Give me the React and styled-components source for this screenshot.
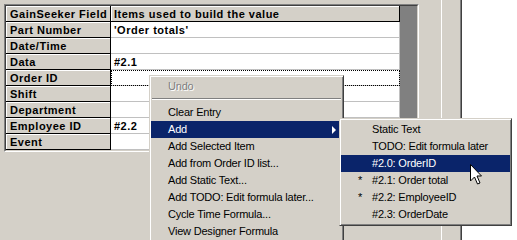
import styled, { createGlobalStyle } from 'styled-components'

const GlobalStyle = createGlobalStyle`
    html, body {
        margin: 0;
        padding: 0;
        background: #d4d0c8;
        overflow: hidden;
    }
    body {
        font-family: "Liberation Sans", Arial, sans-serif;
    }
`

const rows = [
    { field: 'GainSeeker Field', value: 'Items used to build the value', header: true },
    { field: 'Part Number', value: "'Order totals'" },
    { field: 'Date/Time', value: '' },
    { field: 'Data', value: '#2.1' },
    { field: 'Order ID', value: '', focus: true },
    { field: 'Shift', value: '' },
    { field: 'Department', value: '' },
    { field: 'Employee ID', value: '#2.2' },
    { field: 'Event', value: '' },
]

const menuItems = [
    { label: 'Undo', disabled: true },
    { sep: true },
    { label: 'Clear Entry' },
    { label: 'Add', active: true, sub: true },
    { label: 'Add Selected Item' },
    { label: 'Add from Order ID list...' },
    { label: 'Add Static Text...' },
    { label: 'Add TODO: Edit formula later...' },
    { label: 'Cycle Time Formula...' },
    { label: 'View Designer Formula' },
]

const subItems = [
    { label: 'Static Text' },
    { label: 'TODO: Edit formula later' },
    { label: '#2.0: OrderID', active: true },
    { label: '#2.1: Order total', mark: '*' },
    { label: '#2.2: EmployeeID', mark: '*' },
    { label: '#2.3: OrderDate' },
]

function App() {
    return (
        <Screen>
            <GlobalStyle />
            <LeftPane>
                <GridFrame>
                    <GridInner>
                        {rows.map((r) => (
                            <Row key={r.field}>
                                <Cell $fixed $pad={4}>{r.field}</Cell>
                                <Cell $fixed={r.header} $focus={r.focus} $pad={3}>{r.value}</Cell>
                            </Row>
                        ))}
                    </GridInner>
                </GridFrame>
            </LeftPane>
            <Splitter />
            <ListPanel />

            <Menu>
                {menuItems.map((m, i) =>
                    m.sep ? (
                        <Separator key={i}><SepLine /></Separator>
                    ) : (
                        <Item key={i} $active={m.active} $disabled={m.disabled}>
                            {m.label}
                            {m.sub && <SubArrow />}
                        </Item>
                    )
                )}
            </Menu>

            <SubMenu>
                {subItems.map((m) => (
                    <SubItem key={m.label} $active={m.active}>
                        <Mark>{m.mark}</Mark>
                        {m.label}
                    </SubItem>
                ))}
            </SubMenu>

            <Cursor width="12" height="21" viewBox="0 0 12 21">
                <polygon
                    points="0.5,0.5 0.5,17 4.5,13 7.5,20 10,19 7,12 11.5,12"
                    fill="#fff"
                    stroke="#000"
                    strokeWidth="1"
                    strokeLinejoin="miter"
                />
            </Cursor>
        </Screen>
    )
}

const Screen = styled.div`
    width: 517px;
    height: 240px;
    display: flex;
    position: relative;
    overflow: hidden;
    background: #d4d0c8;
`
const LeftPane = styled.div`
    width: 441px;
    flex-shrink: 0;
    padding: 4px 0 0 4px;
    box-sizing: border-box;
`
const GridFrame = styled.div`
    width: 415px;
    box-sizing: border-box;
    border: 1px solid;
    border-color: #808080 #fff #fff #808080;
`
const GridInner = styled.div`
    border: 1px solid;
    border-color: #404040 #d4d0c8 #d4d0c8 #404040;
    background: #808080;
    display: grid;
    grid-template-columns: 105px 289px;
    grid-auto-rows: 16px;
`
const Row = styled.div`
    display: contents;
`
const Cell = styled.div`
    box-sizing: border-box;
    height: 16px;
    padding: 1px 0 0 ${(p) => p.$pad}px;
    font-weight: bold;
    font-size: 11px;
    line-height: 14px;
    letter-spacing: 0.5px;
    white-space: nowrap;
    overflow: hidden;
    color: #000;
    background: ${(p) => (p.$fixed ? '#d4d0c8' : '#fff')};
    border-right: 1px solid ${(p) => (p.$fixed ? '#000' : '#c0c0c0')};
    border-bottom: 1px solid ${(p) => (p.$fixed ? '#000' : '#c0c0c0')};
    box-shadow: ${(p) => (p.$fixed ? 'inset 1px 1px #fff' : 'none')};
    ${(p) => p.$focus && `
        outline: 1px dotted #000;
        outline-offset: -1px;
    `}
`
const Splitter = styled.div`
    width: 19px;
    flex-shrink: 0;
    box-sizing: border-box;
    border-left: 1px solid #fff;
`
const ListPanel = styled.div`
    flex: 1;
    background: #fff;
    border-left: 1px solid #808080;
    box-shadow: inset 1px 0 #404040;
`
const MenuBox = styled.div`
    position: absolute;
    box-sizing: border-box;
    background: #d4d0c8;
    border: 1px solid;
    border-color: #d4d0c8 #404040 #404040 #d4d0c8;
    box-shadow: inset 1px 1px #fff, inset -1px -1px #808080;
    padding: 2px 1px;
    font-family: "Liberation Sans", Arial, sans-serif;
    font-size: 11px;
    letter-spacing: -0.2px;
`
const Menu = styled(MenuBox)`
    left: 149px;
    top: 75px;
    width: 195px;
`
const SubMenu = styled(MenuBox)`
    left: 339px;
    top: 118px;
    width: 173px;
`
const Item = styled.div`
    height: 17px;
    line-height: 17px;
    padding: 0 6px 0 17px;
    display: flex;
    align-items: center;
    white-space: nowrap;
    color: ${(p) => (p.$active ? '#fff' : p.$disabled ? '#808080' : '#000')};
    background: ${(p) => (p.$active ? '#0a246a' : 'transparent')};
    text-shadow: ${(p) => (p.$disabled ? '1px 1px #fff' : 'none')};
`
const SubArrow = styled.span`
    margin-left: auto;
    width: 0;
    height: 0;
    border-left: 4px solid currentColor;
    border-top: 4px solid transparent;
    border-bottom: 4px solid transparent;
`
const Separator = styled.div`
    height: 9px;
    box-sizing: border-box;
    padding: 3px 1px 0;
`
const SepLine = styled.div`
    border-top: 1px solid #808080;
    border-bottom: 1px solid #fff;
`
const SubItem = styled(Item)`
    padding-left: 17px;
`
const Mark = styled.span`
    width: 14px;
    flex-shrink: 0;
`
const Cursor = styled.svg`
    position: absolute;
    left: 470px;
    top: 164px;
    overflow: visible;
`

export default App
